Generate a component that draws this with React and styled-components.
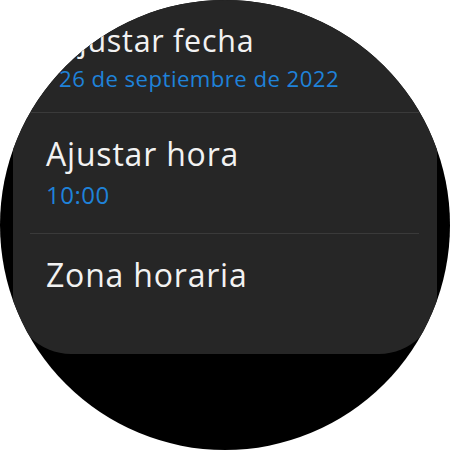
import styled, { createGlobalStyle } from "styled-components";

const Global = createGlobalStyle`
  html, body {
    margin: 0;
    padding: 0;
    background: #ffffff;
  }
  body {
    font-family: "Open Sans", "Noto Sans", sans-serif;
  }
`;

const Watch = styled.div`
  width: 450px;
  height: 450px;
  border-radius: 50%;
  overflow: hidden;
  background: #000000;
`;

const Card = styled.div`
  margin: 0 13px;
  padding-bottom: 36px;
  background: #262626;
  border-radius: 0 0 58px 58px;
`;

const Row = styled.div`
  padding: 22px 20px ${(p) => p.$bottom}px ${(p) => 33 + (p.$indent || 0)}px;
`;

const Title = styled.div`
  font-size: ${(p) => 32 * p.$scale}px;
  line-height: 38px;
  letter-spacing: 0.025em;
  color: #f2f2f2;
  white-space: nowrap;
`;

const Value = styled.div`
  margin-top: ${(p) => p.$gap}px;
  font-size: ${(p) => 24 * p.$scale}px;
  line-height: 28px;
  letter-spacing: 0.02em;
  color: #1f82d9;
  white-space: nowrap;
`;

const Divider = styled.div`
  height: 1px;
  margin: 0 18px 0 17px;
  background: #3a3a3a;
`;

const items = [
  { title: "Ajustar fecha", value: "26 de septiembre de 2022", indent: 13, scale: 0.95, valueScale: 0.925, gap: 5, bottom: 19 },
  { title: "Ajustar hora", value: "10:00", scale: 1, valueScale: 1, gap: 8, bottom: 24 },
  { title: "Zona horaria", scale: 1, bottom: 24 },
];

export default function App() {
  return (
    <>
      <Global />
      <Watch>
        <Card>
          {items.map((item, i) => (
            <div key={item.title}>
              {i > 0 && <Divider />}
              <Row $indent={item.indent} $bottom={item.bottom}>
                <Title $scale={item.scale}>{item.title}</Title>
                {item.value && (
                  <Value $scale={item.valueScale} $gap={item.gap}>
                    {item.value}
                  </Value>
                )}
              </Row>
            </div>
          ))}
        </Card>
      </Watch>
    </>
  );
}
